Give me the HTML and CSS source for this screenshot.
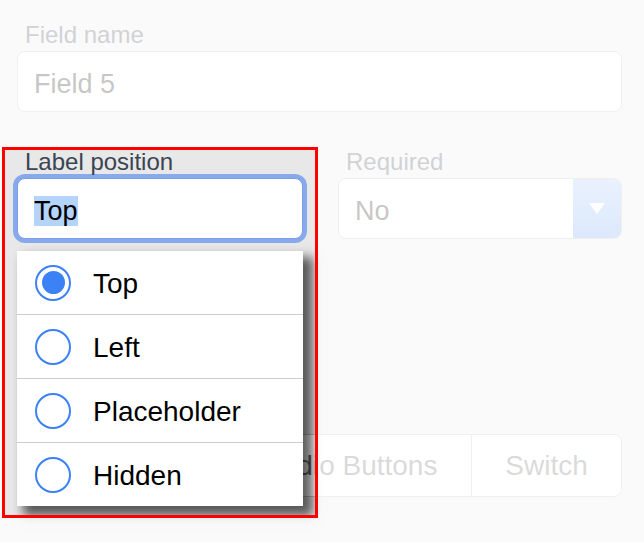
FILE: index.html
```html
<!DOCTYPE html>
<html lang="en">
<head>
<meta charset="utf-8">
<title>Field settings</title>
<link rel="stylesheet" href="styles.css">
</head>
<body>
<div class="page">
  <div class="field">
    <div class="label">Field name</div>
    <div class="input"><span class="value">Field 5</span></div>
  </div>

  <div class="row">
    <div class="field">
      <div class="label label-strong">Label position</div>
      <div class="input focused"><span class="value"><span class="selection">Top</span></span></div>
    </div>
    <div class="field">
      <div class="label">Required</div>
      <div class="select">
        <span class="value">No</span>
        <span class="arrow">
          <svg width="16" height="11" viewBox="0 0 16 11"><polygon points="0,0 16,0 8,11" fill="#ffffff"/></svg>
        </span>
      </div>
    </div>
  </div>

  <div class="segmented">
    <div class="seg">Dropdown</div>
    <div class="seg">Radio Buttons</div>
    <div class="seg">Switch</div>
  </div>

  <div class="menu">
    <div class="option"><span class="radio checked"></span><span class="option-text">Top</span></div>
    <div class="option"><span class="radio"></span><span class="option-text">Left</span></div>
    <div class="option"><span class="radio"></span><span class="option-text">Placeholder</span></div>
    <div class="option"><span class="radio"></span><span class="option-text">Hidden</span></div>
  </div>

  <div class="spotlight"></div>
</div>
</body>
</html>
```

FILE: styles.css
```css
html, body {
  margin: 0;
  padding: 0;
}

body {
  background: #e8e8e8;
  font-family: "Liberation Sans", Arial, sans-serif;
  overflow: hidden;
}

.page {
  position: relative;
  min-height: 542px;
  box-sizing: border-box;
  padding: 21px 22px 0 17px;
}

.label {
  font-size: 24px;
  line-height: 28px;
  padding-left: 8px;
  color: #3a4452;
}

.input,
.select {
  margin-top: 2px;
  height: 61px;
  box-sizing: border-box;
  background: #ffffff;
  border: 1px solid #bdbdbd;
  border-radius: 8px;
  display: flex;
  align-items: center;
  font-size: 27px;
  color: #111111;
}

.input .value,
.select .value {
  padding-left: 16px;
  padding-top: 5px;
  flex: 1;
}

.input.focused {
  border-color: #7b9ee8;
  box-shadow: 0 0 0 4px #88a9ec;
}

.selection {
  background: #b4d4fc;
  color: #000000;
}

.row {
  margin-top: 36px;
  display: grid;
  grid-template-columns: 286px 1fr;
  column-gap: 35px;
}

.select {
  overflow: hidden;
}

.arrow {
  align-self: stretch;
  width: 48px;
  display: flex;
  align-items: center;
  justify-content: center;
  background: linear-gradient(#a4c5f6, #6fa3ef);
}

.arrow svg {
  display: block;
}

.segmented {
  margin-top: 195px;
  height: 63px;
  box-sizing: border-box;
  display: grid;
  grid-template-columns: 209px 244px 1fr;
  background: #ffffff;
  border: 1px solid #c2c2c2;
  border-radius: 8px;
}

.seg {
  display: flex;
  align-items: center;
  justify-content: center;
  font-size: 28px;
  color: #646464;
  border-left: 1px solid #c2c2c2;
}

.seg:first-child {
  border-left: none;
}

.menu {
  position: absolute;
  left: 17px;
  top: 251px;
  width: 286px;
  background: #ffffff;
  box-shadow: 8px 8px 10px 2px rgba(0, 0, 0, 0.62);
}

.option {
  height: 63px;
  display: flex;
  align-items: center;
  border-top: 1px solid #cccccc;
}

.option:first-child {
  border-top: none;
}

.radio {
  width: 36px;
  height: 36px;
  box-sizing: border-box;
  margin-left: 18px;
  border: 2px solid #3b82f6;
  border-radius: 50%;
  display: flex;
  align-items: center;
  justify-content: center;
}

.radio.checked::after {
  content: "";
  width: 23px;
  height: 23px;
  border-radius: 50%;
  background: #3b82f6;
}

.option-text {
  margin-left: 22px;
  padding-top: 2px;
  font-size: 28px;
  color: #000000;
}

.spotlight {
  position: absolute;
  left: 2px;
  top: 147px;
  width: 316px;
  height: 371px;
  box-sizing: border-box;
  border: 3px solid #ff0000;
  box-shadow: 0 0 0 1400px rgba(255, 255, 255, 0.76);
  pointer-events: none;
}
```
